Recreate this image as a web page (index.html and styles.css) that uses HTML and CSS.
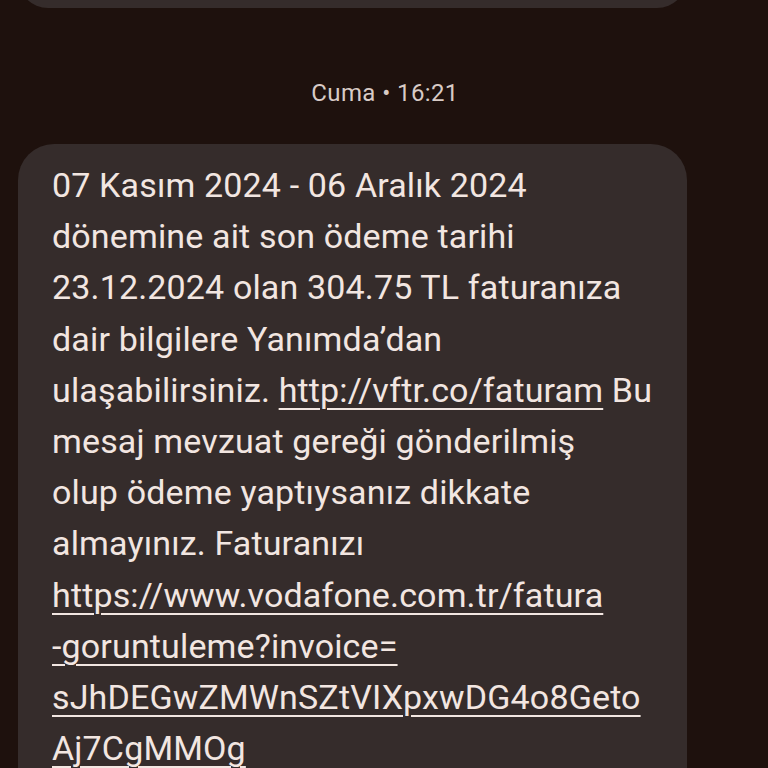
FILE: index.html
```html
<!DOCTYPE html>
<html lang="tr">
<head>
<meta charset="utf-8">
<link rel="stylesheet" href="styles.css">
</head>
<body>
<div class="thread">
  <div class="bubble bubble-prev"></div>
  <div class="stamp">Cuma • 16:21</div>
  <div class="bubble bubble-main">
    <p class="msg">07 Kasım 2024 - 06 Aralık 2024<br>dönemine ait son ödeme tarihi<br>23.12.2024 olan 304.75 TL faturanıza<br>dair bilgilere Yanımda’dan<br>ulaşabilirsiniz. <a class="link" href="#">http://vftr.co/faturam</a> Bu<br>mesaj mevzuat gereği gönderilmiş<br>olup ödeme yaptıysanız dikkate<br>almayınız. Faturanızı<br><a class="link" href="#">https://www.vodafone.com.tr/fatura<br>-goruntuleme?invoice=<br>sJhDEGwZMWnSZtVIXpxwDG4o8Geto<br>Aj7CgMMOg</a></p>
  </div>
</div>
</body>
</html>
```
FILE: styles.css
```css
html, body {
  margin: 0;
  padding: 0;
  background: #1e110d;
  overflow: hidden;
}
.thread {
  width: 768px;
  height: 768px;
  display: flex;
  flex-direction: column;
  font-family: Roboto, "Noto Sans", sans-serif;
}
.bubble {
  background: #352c2b;
  border-radius: 36px;
  margin-left: 18px;
  width: 669px;
}
.bubble-prev {
  height: 60px;
  margin-top: -52px;
  flex: none;
}
.stamp {
  text-align: center;
  color: #d8cbc6;
  font-size: 24px;
  letter-spacing: 0.4px;
  line-height: 30px;
  margin-top: 70px;
  margin-left: 2px;
  flex: none;
}
.bubble-main {
  margin-top: 36px;
  padding: 16px 20px 40px 34px;
  box-sizing: border-box;
  flex: none;
}
.msg {
  margin: 0;
  color: #f2e6e1;
  font-size: 34px;
  letter-spacing: 0.15px;
  line-height: 51.2px;
  white-space: nowrap;
}
.link {
  color: #f2e6e1;
  text-decoration: underline;
  text-decoration-thickness: 2px;
  text-underline-offset: 6px;
}
```
